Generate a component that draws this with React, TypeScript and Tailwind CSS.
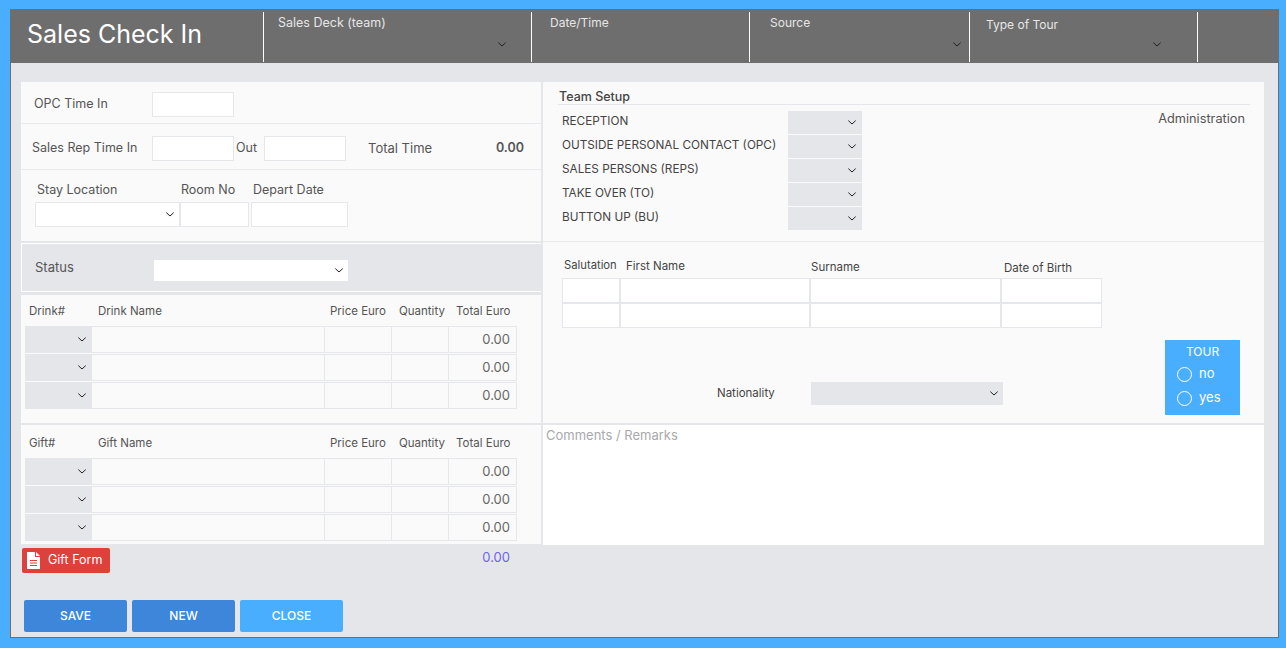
import React from 'react';

const Chevron = () => (
    <svg width="8" height="5" viewBox="0 0 8 5" fill="none" className="shrink-0">
        <path d="M0.3 0.6 L4 4 L7.7 0.6" stroke="#222" strokeWidth="1" />
    </svg>
);

const Select = ({ className = '' }: { className?: string }) => (
    <div className={`flex items-center justify-end ${className}`}>
        <Chevron />
    </div>
);

const Box = ({ className = '' }: { className?: string }) => (
    <input className={`border border-[#e6e7eb] bg-white outline-none ${className}`} />
);

const HeaderCell = ({ label, width, labelClass = 'pt-[2px] text-[12px]', pad, arrow }: { label: string; width: string; labelClass?: string; pad: string; arrow?: string }) => (
    <div className={`relative h-[50px] border-r border-white ${width} ${pad}`}>
        <div className={`leading-[18px] text-[#e6e6e6] ${labelClass}`}>{label}</div>
        {arrow && (
            <div className={`absolute top-[30px] ${arrow}`}>
                <Chevron />
            </div>
        )}
    </div>
);

const ItemTable = ({ first, second, className, headerClass }: { first: string; second: string; className: string; headerClass: string }) => (
    <div className={`bg-[#fafafa] ${className}`}>
        <div className={`flex items-start pl-[8px] text-[11.5px] leading-[18px] text-[#555] ${headerClass}`}>
            <div className="w-[69px]">{first}</div>
            <div className="w-[232px]">{second}</div>
            <div className="w-[69px] whitespace-nowrap">Price Euro</div>
            <div className="w-[57px]">Quantity</div>
            <div className="w-[60px] whitespace-nowrap">Total Euro</div>
        </div>
        {[0, 1, 2].map((i) => (
            <div key={i} className="ml-[4px] flex h-[28px] w-[492px] text-[13px] text-[#666]">
                <Select className="mb-[1px] w-[67px] bg-[#e5e6ea] pr-[6px]" />
                <div className="mb-[1px] flex flex-1 border border-l-0 border-[#e6e7eb]">
                    <div className="w-[233px] border-r border-[#e6e7eb]" />
                    <div className="w-[67px] border-r border-[#e6e7eb]" />
                    <div className="w-[57px] border-r border-[#e6e7eb]" />
                    <div className="flex-1 pr-[6px] text-right leading-[25px]">0.00</div>
                </div>
            </div>
        ))}
    </div>
);

const Team = ({ label }: { label: string }) => (
    <div className="flex h-[24px]">
        <div className="w-[230px] pl-[4px] text-[11.75px] leading-[20px] whitespace-nowrap text-[#444]">{label}</div>
        <Select className="mb-[1px] w-[74px] bg-[#e5e6ea] pr-[6px]" />
    </div>
);

const Radio = ({ label }: { label: string }) => (
    <div className="flex h-[24px] items-center pl-[12px]">
        <span className="h-[15px] w-[15px] rounded-full border border-white" />
        <span className="ml-[7px] text-[13px]">{label}</span>
    </div>
);

const App = () => {
    return (
        <div className="h-[648px] w-[1286px] overflow-hidden bg-[#4aaeff] pt-[9px] pl-[10px] font-['Inter',sans-serif]">
            <div className="h-[629px] w-[1269px] border-r border-b border-l border-[#6e6e6e] bg-[#e5e6ea]">
                <div className="flex h-[54px] items-end bg-[#6e6e6e] pb-[1px]">
                    <div className="h-[53px] w-[252px] pl-[16px] text-[25px] leading-[51px] text-white">Sales Check In</div>
                    <div className="h-[50px] border-l border-white" />
                    <HeaderCell label="Sales Deck (team)" width="w-[268px]" pad="pl-[14px]" labelClass="pt-[2px] text-[12.5px]" arrow="left-[234px]" />
                    <HeaderCell label="Date/Time" width="w-[218px]" pad="pl-[18px]" />
                    <HeaderCell label="Source" width="w-[220px]" pad="pl-[20px]" arrow="left-[203px]" />
                    <HeaderCell label="Type of Tour" width="w-[228px]" pad="pl-[16px]" labelClass="pt-[4px] text-[12px]" arrow="left-[183px]" />
                </div>

                <div className="flex gap-[2px] pt-[19px] pl-[10px]">
                    <div className="w-[520px]">
                        <div className="h-[159px] bg-[#fafafa] text-[12.5px] text-[#555]">
                            <div className="flex h-[42px] items-center border-b border-[#e8e9ec] pt-[4px]">
                                <div className="w-[131px] pl-[13px]">OPC Time In</div>
                                <Box className="h-[25px] w-[82px]" />
                            </div>
                            <div className="flex h-[46px] items-center border-b border-[#e8e9ec] pt-[4px]">
                                <div className="w-[131px] pl-[11px] whitespace-nowrap">Sales Rep Time In</div>
                                <Box className="h-[25px] w-[82px]" />
                                <div className="w-[30px] pl-[2px]">Out</div>
                                <Box className="h-[25px] w-[82px]" />
                                <div className="w-[129px] pl-[22px] text-[13px]">Total Time</div>
                                <div className="w-[49px] text-right font-semibold">0.00</div>
                            </div>
                            <div className="flex pt-[10px] pl-[14px]">
                                <div className="w-[145px]">
                                    <div className="pl-[2px] leading-[20px]">Stay Location</div>
                                    <Select className="mt-[2px] h-[25px] border border-[#e6e7eb] bg-white pr-[5px]" />
                                </div>
                                <div className="w-[71px]">
                                    <div className="pl-[1px] leading-[20px]">Room No</div>
                                    <Box className="mt-[2px] h-[25px] w-[69px]" />
                                </div>
                                <div>
                                    <div className="pl-[2px] leading-[20px]">Depart Date</div>
                                    <Box className="mt-[2px] h-[25px] w-[97px]" />
                                </div>
                            </div>
                        </div>
                        <div className="mt-[2px] flex h-[49px] border border-r-0 border-white">
                            <div className="w-[132px] pt-[13px] pl-[13px] text-[13px] leading-[20px] text-[#555]">Status</div>
                            <Select className="mt-[16px] h-[21px] w-[194px] bg-white pr-[5px]" />
                        </div>
                        <ItemTable first="Drink#" second="Drink Name" className="mt-[3px] h-[128px]" headerClass="h-[31px] pt-[7px]" />
                        <ItemTable first="Gift#" second="Gift Name" className="mt-[2px] h-[119px]" headerClass="h-[33px] pt-[9px]" />
                        <div className="flex justify-between pt-[4px] pr-[31px] pl-[1px]">
                            <div className="flex h-[25px] w-[88px] items-center rounded-[2px] bg-[#de403c] pl-[5px] text-[12.5px] text-white">
                                <svg width="13" height="17" viewBox="0 0 13 17" className="shrink-0">
                                    <path d="M0 0 H8 V5 H13 V17 H0 Z M9 0 L13 4 H9 Z" fill="#fff" />
                                    <path d="M3 8.5 H10 M3 11 H10 M3 13.5 H10" stroke="#de403c" strokeWidth="1.2" />
                                </svg>
                                <span className="ml-[8px] pb-[1px] whitespace-nowrap">Gift Form</span>
                            </div>
                            <div className="text-[13px] leading-[18px] text-[#6f63f0]">0.00</div>
                        </div>
                        <div className="flex gap-[5px] pt-[27px] pl-[3px] text-[12px] font-medium text-white">
                            <button className="h-[32px] w-[103px] rounded-[2px] bg-[#3d86d9] pb-[1px]">SAVE</button>
                            <button className="h-[32px] w-[103px] rounded-[2px] bg-[#3d86d9] pb-[1px]">NEW</button>
                            <button className="h-[32px] w-[103px] rounded-[2px] bg-[#4aaeff] pb-[1px]">CLOSE</button>
                        </div>
                    </div>

                    <div className="w-[721px]">
                        <div className="h-[160px] border-b border-[#e8e9ec] bg-[#fafafa] pt-[6px] pl-[15px]">
                            <div className="flex w-[692px] flex-col">
                                <div className="h-[17px] border-b border-[#e6e7eb] pl-[1px] text-[12.5px] leading-[17px] font-medium text-[#444]">Team Setup</div>
                                <div className="relative pt-[6px]">
                                    <Team label="RECEPTION" />
                                    <Team label="OUTSIDE PERSONAL CONTACT (OPC)" />
                                    <Team label="SALES PERSONS (REPS)" />
                                    <Team label="TAKE OVER (TO)" />
                                    <Team label="BUTTON UP (BU)" />
                                    <div className="absolute top-[4px] right-[5px] text-[12.75px] leading-[20px] text-[#555]">Administration</div>
                                </div>
                            </div>
                        </div>
                        <div className="h-[181px] bg-[#fafafa] pl-[19px]">
                            <div className="flex h-[36px] text-[11.5px] leading-[16px] text-[#444]">
                                <div className="w-[58px] pt-[15px] pl-[2px] text-[11.25px] whitespace-nowrap">Salutation</div>
                                <div className="w-[190px] pt-[16px] pl-[6px]">First Name</div>
                                <div className="w-[191px] pt-[17px] pl-[1px]">Surname</div>
                                <div className="pt-[18px] pl-[3px]">Date of Birth</div>
                            </div>
                            {[0, 1].map((i) => (
                                <div key={i} className="flex h-[25px]">
                                    <Box className="w-[58px]" />
                                    <Box className="w-[190px]" />
                                    <Box className="w-[191px]" />
                                    <Box className="w-[101px]" />
                                </div>
                            ))}
                            <div className="relative h-[95px]">
                                <div className="absolute top-[55px] left-[155px] text-[11.5px] leading-[20px] text-[#444]">Nationality</div>
                                <Select className="absolute top-[54px] left-[249px] h-[23px] w-[192px] bg-[#e5e6ea] pr-[5px]" />
                                <div className="absolute top-[12px] left-[603px] h-[75px] w-[75px] bg-[#4aaeff] pt-[3px] text-white">
                                    <div className="pb-[1px] text-center text-[12px] leading-[18px]">TOUR</div>
                                    <Radio label="no" />
                                    <Radio label="yes" />
                                </div>
                            </div>
                        </div>
                        <div className="mt-[2px] h-[120px] bg-white pt-[2px] pl-[3px] text-[13px] leading-[16px] text-[#a9a9ae]">Comments / Remarks</div>
                    </div>
                </div>
            </div>
        </div>
    );
};

export default App;
